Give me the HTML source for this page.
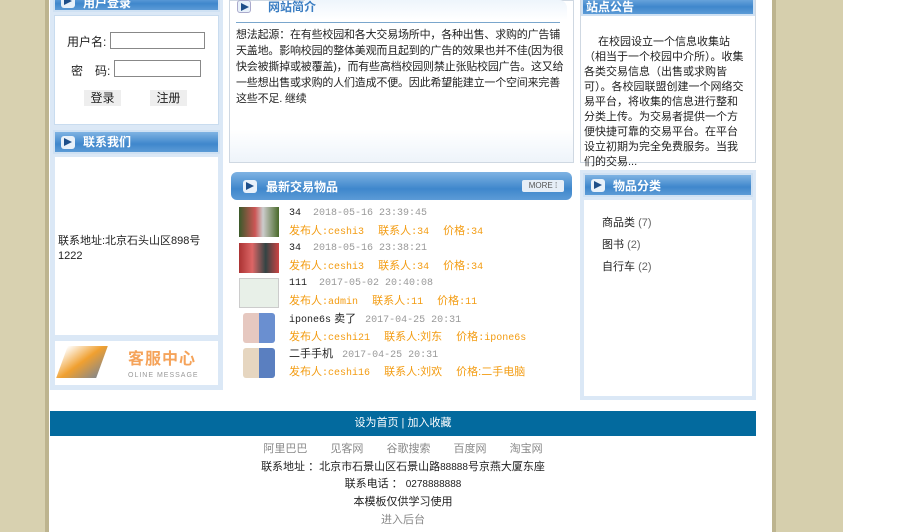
<!DOCTYPE html>
<html><head><meta charset="utf-8"><style>
*{margin:0;padding:0;box-sizing:border-box}
body{width:900px;height:532px;overflow:hidden;background:#fff;font-family:"Liberation Sans","Noto Sans CJK SC",sans-serif;font-size:12px;color:#222;position:relative}
.bg{position:absolute;top:0;height:532px;background:#d6cfad}
.abs{position:absolute;line-height:14px}
.hdr{position:absolute;background:linear-gradient(#7fb3e3,#3f87cc 60%,#5c9bd6);color:#fff;font-weight:bold;font-size:12px;border:2px solid #cfe1f3}
.ico{position:absolute;width:14px;height:13px;background:#e8f1fa;border-radius:3px}
.ico:after{content:"";position:absolute;left:3px;top:2px;border-left:8px solid #1e4f8a;border-top:4px solid transparent;border-bottom:4px solid transparent}
.or{color:#f39c12;font-size:11px}
.gr{color:#999;font-family:"Liberation Mono",monospace;font-size:10px}
.mono{font-family:"Liberation Mono",monospace;font-size:10px}
.thumb{position:absolute;left:239px;width:40px;height:30px}
</style></head><body>
<div class="bg" style="left:0;width:48px;background:#d8d1b0"></div>
<div class="bg" style="left:45px;width:4px;background:#bdb48f"></div>
<div class="bg" style="left:774px;width:69px"></div>
<div class="bg" style="left:772px;width:4px;background:#bdb48f"></div>

<div class="abs" style="left:50px;top:0;width:173px;height:390px;background:#dbe8f6"></div>
<div class="hdr" style="left:53px;top:-8px;width:167px;height:20px"><div class="ico" style="left:6px;top:1px"></div><span class="abs" style="left:28px;top:2px">用户登录</span></div>
<div class="abs" style="left:54px;top:15px;width:165px;height:110px;background:#fff;border:1px solid #c9dcef"></div>
<div class="abs" style="left:67px;top:35px">用户名:</div>
<div class="abs" style="left:110px;top:32px;width:95px;height:17px;border:1px solid #888"></div>
<div class="abs" style="left:71px;top:64px">密　码:</div>
<div class="abs" style="left:114px;top:60px;width:87px;height:17px;border:1px solid #888"></div>
<div class="abs" style="left:84px;top:90px;width:37px;height:16px;background:#eee;text-align:center;font-size:12px;line-height:16px">登录</div>
<div class="abs" style="left:150px;top:90px;width:37px;height:16px;background:#eee;text-align:center;font-size:12px;line-height:16px">注册</div>
<div class="hdr" style="left:53px;top:130px;width:167px;height:24px"><div class="ico" style="left:6px;top:4px"></div><span class="abs" style="left:28px;top:3px">联系我们</span></div>
<div class="abs" style="left:55px;top:157px;width:163px;height:178px;background:#fff"></div>
<div class="abs" style="left:58px;top:234px;line-height:15px;font-size:11px">联系地址:北京石头山区898号<br>1222</div>
<div class="abs" style="left:55px;top:341px;width:163px;height:44px;background:#fff"></div>
<div class="abs" style="left:62px;top:346px;width:40px;height:32px;background:linear-gradient(135deg,#fff,#f0a030 50%,#888);transform:skewX(-20deg)"></div>
<div class="abs" style="left:128px;top:351px;color:#f5a35a;font-size:16px;font-weight:bold;letter-spacing:1px;line-height:18px">客服中心</div>
<div class="abs" style="left:128px;top:372px;color:#999;font-size:7px;letter-spacing:1px;line-height:8px">OLINE MESSAGE</div>

<div class="abs" style="left:229px;top:0;width:345px;height:163px;border:1px solid #cfd8e2;background:linear-gradient(#fff 80%,#eef4fa)"></div>
<div class="abs" style="left:305px;top:0;width:262px;height:20px;background:linear-gradient(#eef5fc,#fff);border-radius:0 8px 0 0"></div>
<div class="ico" style="left:237px;top:0;border:1px solid #aac"></div>
<div class="abs" style="left:268px;top:0;color:#3a7dc2;font-weight:bold">网站简介</div>
<div class="abs" style="left:236px;top:22px;width:324px;height:1px;background:#7aa6cc"></div>
<div class="abs" style="left:236px;top:27px;width:334px;line-height:16px;font-size:11px;letter-spacing:-0.2px">想法起源：在有些校园和各大交易场所中，各种出售、求购的广告铺天盖地。影响校园的整体美观而且起到的广告的效果也并不佳(因为很快会被撕掉或被覆盖)，而有些高档校园则禁止张贴校园广告。这又给一些想出售或求购的人们造成不便。因此希望能建立一个空间来完善这些不足. 继续</div>

<div class="hdr" style="left:231px;top:172px;width:341px;height:28px;border:none;border-radius:6px"><div class="ico" style="left:12px;top:8px"></div><span class="abs" style="left:35px;top:8px">最新交易物品</span></div>
<div class="abs" style="left:522px;top:180px;width:42px;height:12px;background:#e6eef7;border-radius:2px;font-size:8px;color:#555;text-align:center;line-height:12px">MORE ⁞</div>

<div class="thumb" style="top:207px;background:linear-gradient(90deg,#3a5a2a,#c55 40%,#ccc 60%,#4a6a2a)"></div>
<div class="abs mono" style="left:289px;top:207px">34 <span class="gr">&nbsp;2018-05-16 23:39:45</span></div>
<div class="abs or" style="left:289px;top:224px">发布人<span class="mono">:ceshi3</span>　 联系人<span class="mono">:34</span>　 价格<span class="mono">:34</span></div>
<div class="thumb" style="top:243px;background:linear-gradient(90deg,#a33,#d66,#344,#c44)"></div>
<div class="abs mono" style="left:289px;top:242px">34 <span class="gr">&nbsp;2018-05-16 23:38:21</span></div>
<div class="abs or" style="left:289px;top:259px">发布人<span class="mono">:ceshi3</span>　 联系人<span class="mono">:34</span>　 价格<span class="mono">:34</span></div>
<div class="thumb" style="top:278px;background:#e8f0e8;border:1px solid #ccc"></div>
<div class="abs mono" style="left:289px;top:277px">111 <span class="gr">&nbsp;2017-05-02 20:40:08</span></div>
<div class="abs or" style="left:289px;top:294px">发布人<span class="mono">:admin</span>　 联系人<span class="mono">:11</span>　 价格<span class="mono">:11</span></div>
<div class="thumb" style="left:243px;width:32px;top:313px;background:linear-gradient(90deg,#e6c8c0 50%,#6a8fd0 50%);border-radius:3px"></div>
<div class="abs" style="left:289px;top:312px;font-size:11px"><span class="mono">ipone6s</span> 卖了 <span class="gr">&nbsp;2017-04-25 20:31</span></div>
<div class="abs or" style="left:289px;top:330px">发布人<span class="mono">:ceshi21</span>　 联系人:刘东　 价格<span class="mono">:ipone6s</span></div>
<div class="thumb" style="left:243px;width:32px;top:348px;background:linear-gradient(90deg,#e6d6c0 50%,#5a7fc0 50%);border-radius:3px"></div>
<div class="abs" style="left:289px;top:347px;font-size:11px">二手手机 <span class="gr">&nbsp;2017-04-25 20:31</span></div>
<div class="abs or" style="left:289px;top:365px">发布人<span class="mono">:ceshi16</span>　 联系人:刘欢　 价格:二手电脑</div>

<div class="abs" style="left:580px;top:0;width:176px;height:163px;border:1px solid #cfd8e2"></div>
<div class="hdr" style="left:581px;top:-6px;width:174px;height:22px"><span class="abs" style="left:3px;top:4px">站点公告</span></div>
<div class="abs" style="left:584px;top:35px;width:164px;line-height:15px;font-size:11px">　 在校园设立一个信息收集站（相当于一个校园中介所）。收集各类交易信息（出售或求购皆可）。各校园联盟创建一个网络交易平台，将收集的信息进行整和分类上传。为交易者提供一个方便快捷可靠的交易平台。在平台设立初期为完全免费服务。当我们的交易...</div>
<div class="abs" style="left:580px;top:170px;width:176px;height:230px;background:#dbe8f6"></div>
<div class="hdr" style="left:583px;top:173px;width:170px;height:24px"><div class="ico" style="left:6px;top:4px"></div><span class="abs" style="left:28px;top:4px">物品分类</span></div>
<div class="abs" style="left:584px;top:200px;width:168px;height:196px;background:#fff"></div>
<div class="abs" style="left:602px;top:212px;line-height:22px;font-size:11px">商品类 <span style="color:#666">(7)</span><br>图书 <span style="color:#666">(2)</span><br>自行车 <span style="color:#666">(2)</span></div>

<div class="abs" style="left:50px;top:411px;width:706px;height:25px;background:#036a9e;color:#fff;text-align:center;line-height:25px;font-size:11px">设为首页 | 加入收藏</div>
<div class="abs" style="left:50px;top:442px;width:706px;text-align:center;color:#888;word-spacing:20px;font-size:11px">阿里巴巴 见客网 谷歌搜索 百度网 淘宝网</div>
<div class="abs" style="left:50px;top:460px;width:706px;text-align:center;font-size:11px">联系地址 ：北京市石景山区石景山路<span style="font-size:10px">88888</span>号京燕大厦东座</div>
<div class="abs" style="left:50px;top:477px;width:706px;text-align:center;font-size:11px">联系电话 ： <span style="font-size:10px">0278888888</span></div>
<div class="abs" style="left:50px;top:495px;width:706px;text-align:center;font-size:11px">本模板仅供学习使用</div>
<div class="abs" style="left:50px;top:513px;width:706px;text-align:center;color:#888;font-size:11px">进入后台</div>
</body></html>
